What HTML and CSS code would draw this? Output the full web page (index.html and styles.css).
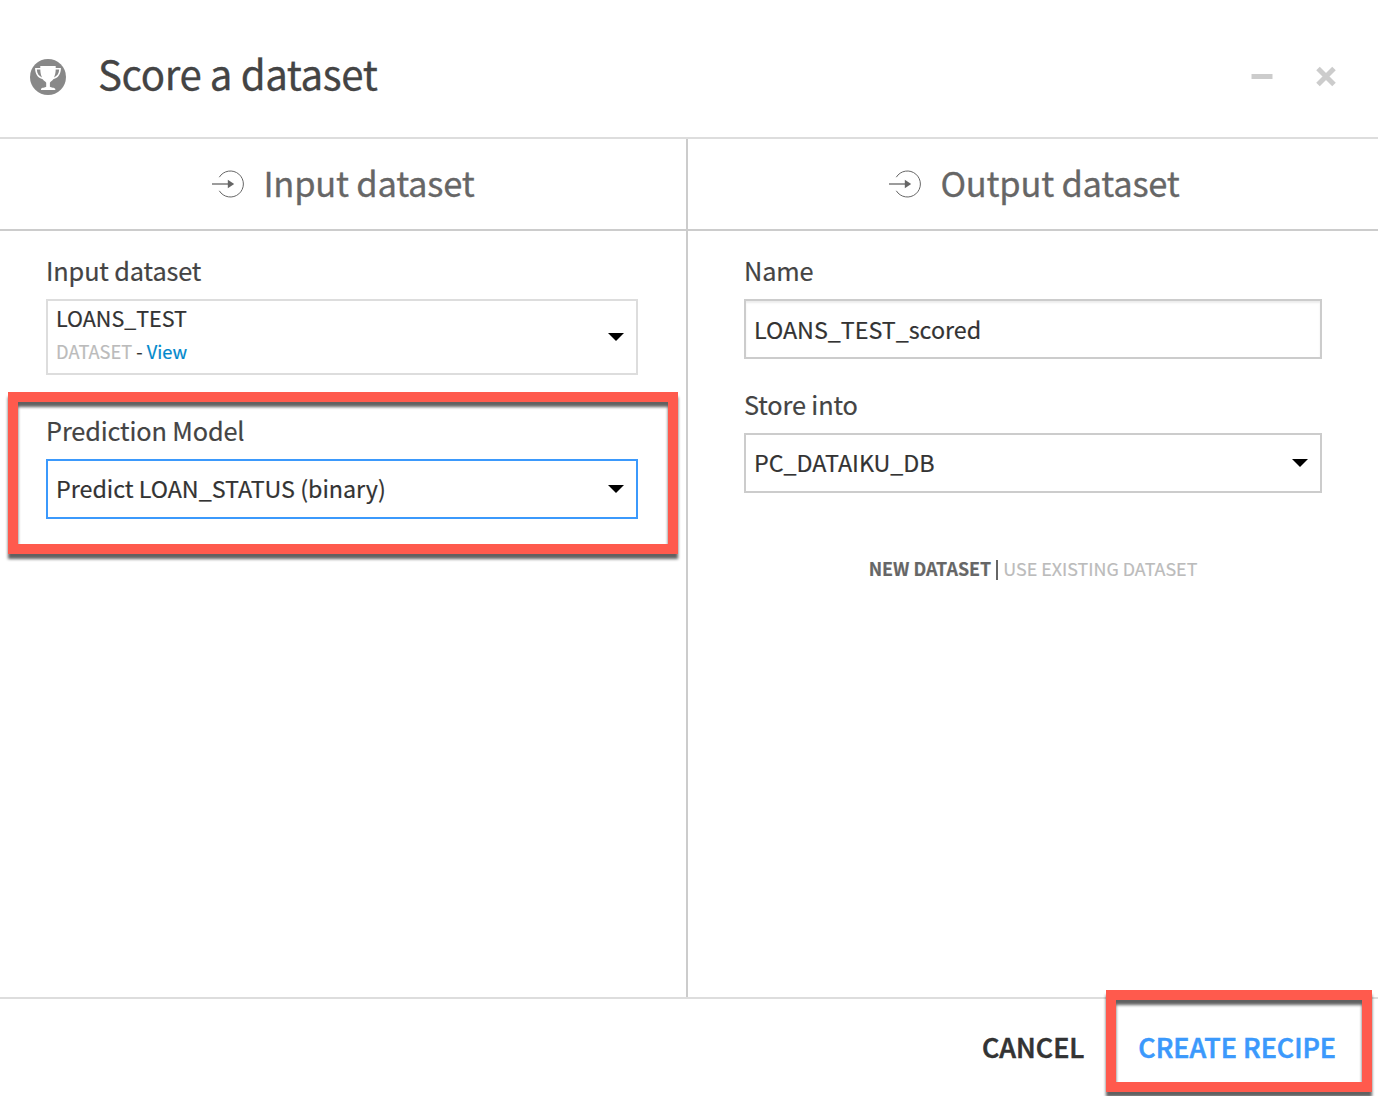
FILE: index.html
```html
<!DOCTYPE html>
<html lang="en">
<head>
<meta charset="utf-8">
<title>Score a dataset</title>
<link rel="stylesheet" href="styles.css">
</head>
<body>
<main class="modal">
  <header class="modal-header">
    <svg class="trophy" viewBox="0 0 36 36" aria-hidden="true">
      <circle cx="18" cy="18" r="18" fill="#888"/>
      <path fill="#fff" d="M10.3 7h15.400v2h5.200c0 5.900-2.500 10-7.600 11.200-1.300 1.800-3 2.400-3.400 3.500v4c1 .8 5 .8 5.400 2.200v1H11v-1c.4-1.400 4.200-1.400 5.200-2.200v-4c-.4-1.100-2.200-1.700-3.500-3.500C7.600 19 5.100 14.900 5.100 9h5.200z"/>
      <path fill="#888" d="M6.800 10.500h3.500c.1 3.400.7 5.900 1.700 7.900-3.300-1.400-4.900-4-5.200-7.900zM29.200 10.500h-3.500c-.1 3.400-.7 5.900-1.700 7.900 3.300-1.400 4.900-4 5.200-7.900z"/>
    </svg>
    <h1 class="title">Score a dataset</h1>
    <div class="window-actions">
      <svg class="action" viewBox="0 0 22 22"><path d="M.5 10.500h21" stroke="#ccc" stroke-width="5"/></svg>
      <svg class="action" viewBox="0 0 22 22"><path d="M3 2.500l16 16M19 2.500l-16 16" stroke="#ccc" stroke-width="5"/></svg>
    </div>
  </header>

  <div class="columns">
    <section class="column column-input">
      <h2 class="column-header">
        <svg class="arrow-in" viewBox="0 0 33 28"><path d="M7.300 7.200a13 13 0 1 1 0 13.600" fill="none" stroke="#666" stroke-width="1"/><path d="M0 14h17" stroke="#666" stroke-width="1.300"/><path d="M15.800 9.700l6.400 4.300-6.400 4.300z" fill="#666"/></svg>
        <span>Input dataset</span>
      </h2>
      <div class="fields">
        <div class="label">Input dataset</div>
        <div class="select select-tall">
          <div class="option">
            <div class="option-name">LOANS_TEST</div>
            <div class="option-meta"><span class="muted">DATASET</span> - <a class="link">View</a></div>
          </div>
          <svg class="caret" viewBox="0 0 16 8"><path d="M0 0h16L8 8z"/></svg>
        </div>
        <div class="label label-model">Prediction Model</div>
        <div class="select select-active">
          <span class="value">Predict LOAN_STATUS (binary)</span>
          <svg class="caret" viewBox="0 0 16 8"><path d="M0 0h16L8 8z"/></svg>
        </div>
      </div>
      <div class="callout callout-model"></div>
    </section>

    <section class="column column-output">
      <h2 class="column-header">
        <svg class="arrow-in" viewBox="0 0 33 28"><path d="M7.300 7.200a13 13 0 1 1 0 13.600" fill="none" stroke="#666" stroke-width="1"/><path d="M0 14h17" stroke="#666" stroke-width="1.300"/><path d="M15.800 9.700l6.400 4.300-6.400 4.300z" fill="#666"/></svg>
        <span>Output dataset</span>
      </h2>
      <div class="fields">
        <div class="label">Name</div>
        <div class="select text-input"><span class="value">LOANS_TEST_scored</span></div>
        <div class="label label-store">Store into</div>
        <div class="select">
          <span class="value">PC_DATAIKU_DB</span>
          <svg class="caret" viewBox="0 0 16 8"><path d="M0 0h16L8 8z"/></svg>
        </div>
        <div class="mode-switch"><b>NEW DATASET</b><i class="bar"></i><span>USE EXISTING DATASET</span></div>
      </div>
    </section>
  </div>

  <footer class="modal-footer">
    <span class="button cancel">CANCEL</span>
    <span class="button create">CREATE RECIPE</span>
    <div class="callout callout-create"></div>
  </footer>
</main>
</body>
</html>
```
FILE: styles.css
```css
* { box-sizing: border-box; }

body {
  margin: 0;
  background: #fff;
  color: #333;
  font-family: "Noto Sans CJK SC", "Noto Sans", sans-serif;
  -webkit-text-stroke-width: .2px;
}

h1, h2 { margin: 0; font-weight: 400; }
svg { display: block; flex: none; }

.modal {
  display: flex;
  flex-direction: column;
  width: 1378px;
  height: 1096px;
  overflow: hidden;
}

.modal-header {
  display: flex;
  align-items: center;
  height: 139px;
  padding: 14px 41px 0 30px;
  border-bottom: 2px solid #ddd;
}
.trophy { width: 36px; height: 36px; margin-top: 3px; }
.title {
  margin-left: 32px;
  padding-bottom: 6px;
  color: #444;
  font-size: 40.200px;
  letter-spacing: -.4px;
  line-height: 60px;
  -webkit-text-stroke-width: .3px;
}
.window-actions { display: flex; gap: 42px; margin: 2px 0 0 auto; }
.action { width: 22px; height: 22px; }

.columns { display: grid; grid-template-columns: 688px 690px; height: 858px; }
.column { position: relative; }
.column-input { border-right: 2px solid #ccc; }

.column-header {
  display: flex;
  align-items: center;
  justify-content: center;
  gap: 18px;
  height: 92px;
  padding-left: 1px;
  border-bottom: 2px solid #ccc;
  color: #666;
  font-size: 34.500px;
  letter-spacing: -.23px;
  line-height: 50px;
  -webkit-text-stroke-width: .3px;
}
.column-header span { padding-bottom: 4px; }
.column-output .column-header { padding-left: 3px; }
.arrow-in { width: 33px; height: 28px; }

.fields { padding: 22px 48px 0 46px; }
.column-output .fields { padding: 22px 56px 0; }

.label {
  height: 34px;
  margin-bottom: 12px;
  color: #444;
  font-size: 25.300px;
  letter-spacing: -.13px;
  line-height: 34px;
}
.label-model { margin-top: 38px; }
.label-store { margin-top: 28px; }

.select {
  display: flex;
  align-items: center;
  justify-content: space-between;
  height: 60px;
  padding: 0 12px 0 8px;
  border: 2px solid #ccc;
}
.select-tall { height: 76px; border-color: #ddd; }
.select-active { border-color: #3b99fc; }
.text-input { box-shadow: inset 0 2px 2px rgba(0, 0, 0, .075); }
.value { padding-bottom: 2px; font-size: 23.300px; letter-spacing: -.02px; line-height: 34px; }
.text-input .value { padding-bottom: 0; }
.caret { width: 16px; height: 8px; }

.option { padding-bottom: 5px; }
.option-name { font-size: 21.500px; line-height: 32px; }
.option-meta { padding-top: 1px; margin-bottom: -1px; font-size: 18.300px; line-height: 33px; }
.muted { color: #bbb; }
.link { color: #0088cc; }

.mode-switch {
  display: flex;
  align-items: center;
  justify-content: center;
  gap: 5px;
  margin-top: 59px;
  color: #bbb;
  font-size: 17.900px;
  line-height: 32px;
}
.mode-switch b { color: #666; }
.bar { width: 2px; height: 20px; margin-top: 3px; background: #666; }

.modal-footer {
  position: relative;
  display: flex;
  align-items: center;
  justify-content: flex-end;
  gap: 54px;
  height: 99px;
  padding: 0 42px 2px 0;
  border-top: 2px solid #ddd;
}
.button {
  font-size: 26.900px;
  font-weight: 500;
  line-height: 40px;
  -webkit-text-stroke-width: .6px;
}
.create { color: #3b99fc; }

.callout {
  position: absolute;
  border: 10px solid #ff5a4d;
  filter: drop-shadow(0 5.500px 1.500px rgba(0, 0, 0, .62));
}
.callout-model { left: 8px; top: 253px; width: 670px; height: 162px; }
.callout-create { right: 6px; top: -9px; width: 266px; height: 102px; }
```
